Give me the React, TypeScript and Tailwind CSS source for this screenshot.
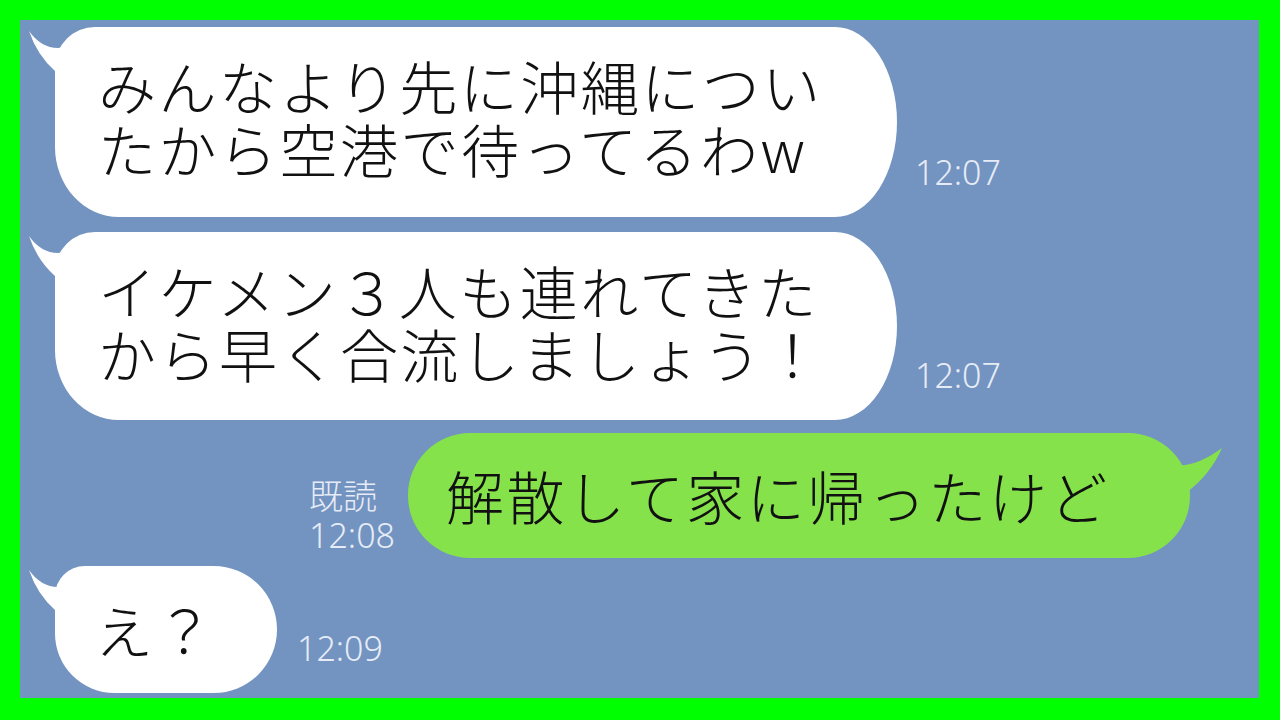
import React from 'react';

const jp = "font-['Noto_Sans_CJK_JP',sans-serif] font-light";
const stampFont = "font-['Noto_Sans','Noto_Sans_CJK_JP',sans-serif] font-light";

function LeftTail({ tall }: { tall: boolean }) {
  // horn at the top-left of the friend's bubbles
  if (tall) {
    return (
      <svg className="absolute -left-[30px] top-0 w-[100px] h-[120px]" viewBox="0 0 100 120">
        <path d="M4 4 Q16 21 33 21 Q45 21 60 8 Q70 2 85 0 L100 0 L100 120 L30 120 L30 44 Q12 28 4 4 Z" fill="#ffffff" />
      </svg>
    );
  }
  return (
    <svg className="absolute -left-[30px] top-0 w-[100px] h-[66px]" viewBox="0 0 100 66">
      <path d="M4 4 Q16 21 33 21 Q45 21 60 8 Q70 2 85 0 L100 0 L100 66 L30 66 L30 44 Q12 28 4 4 Z" fill="#ffffff" />
    </svg>
  );
}

function RightTail() {
  return (
    <svg className="absolute -right-[40px] top-0 w-[100px] h-[80px]" viewBox="0 0 100 80">
      <path d="M92 15 Q66 34 47 32 L40 40 L40 75 L57 59 Q80 42 92 15 Z" fill="#86e24b" />
    </svg>
  );
}

function Stamp({ children, pb }: { children: React.ReactNode; pb: string }) {
  return (
    <div className={`${stampFont} text-[34px] leading-[34px] text-[#e6ecf6] whitespace-nowrap ${pb}`}>
      {children}
    </div>
  );
}

export default function App() {
  return (
    <div className="w-[1280px] h-[720px] bg-[#00ff00] pt-[20px] pl-[20px] pr-[21px] pb-[22px]">
      <div className="h-full bg-[#7393c1] flex flex-col pl-[35px] pt-[7px]">
        {/* message 1 */}
        <div className="flex items-end gap-[18px]">
          <div className="relative w-[842px] h-[190px] bg-white rounded-tr-[62px_95px] rounded-br-[62px_95px] rounded-bl-[64px_70px] rounded-tl-[40px] pl-[43px] pt-[27px]">
            <LeftTail tall />
            <p className={`relative ${jp} text-[58px] leading-[63px] tracking-[2.5px] text-[#111] whitespace-nowrap`}>
              みんなより先に沖縄につい
              <br />
              たから空港で待ってるわw
            </p>
          </div>
          <Stamp pb="pb-[28px]">12:07</Stamp>
        </div>

        {/* message 2 */}
        <div className="flex items-end gap-[18px] mt-[15px]">
          <div className="relative w-[842px] h-[188px] bg-white rounded-tr-[62px_94px] rounded-br-[62px_94px] rounded-bl-[64px_70px] rounded-tl-[40px] pl-[43px] pt-[27px]">
            <LeftTail tall />
            <p className={`relative ${jp} text-[58px] leading-[63px] tracking-[2.5px] text-[#111] whitespace-nowrap`}>
              イケメン３人も連れてきた
              <br />
              から早く合流しましょう！
            </p>
          </div>
          <Stamp pb="pb-[28px]">12:07</Stamp>
        </div>

        {/* my reply */}
        <div className="flex justify-end items-end gap-[13px] mt-[13px] pr-[69px]">
          <div className={`${stampFont} text-[34px] leading-[40px] text-[#e6ecf6] whitespace-nowrap pb-[3px]`}>
            <div className={jp}>既読</div>
            <div>12:08</div>
          </div>
          <div className="relative w-[782px] h-[125px] bg-[#86e24b] rounded-[62px] flex items-center pl-[38px]">
            <RightTail />
            <p className={`relative ${jp} text-[58px] leading-[63px] tracking-[2.5px] text-[#111] whitespace-nowrap`}>
              解散して家に帰ったけど
            </p>
          </div>
        </div>

        {/* message 3 */}
        <div className="flex items-end gap-[20px] mt-[8px]">
          <div className="relative w-[222px] h-[127px] bg-white rounded-tr-[64px] rounded-br-[64px] rounded-bl-[60px] rounded-tl-[30px] flex items-center pl-[40px]">
            <LeftTail tall={false} />
            <p className={`relative ${jp} text-[58px] leading-[63px] tracking-[2.5px] text-[#111] whitespace-nowrap`}>
              え？
            </p>
          </div>
          <Stamp pb="pb-[28px]">12:09</Stamp>
        </div>
      </div>
    </div>
  );
}
